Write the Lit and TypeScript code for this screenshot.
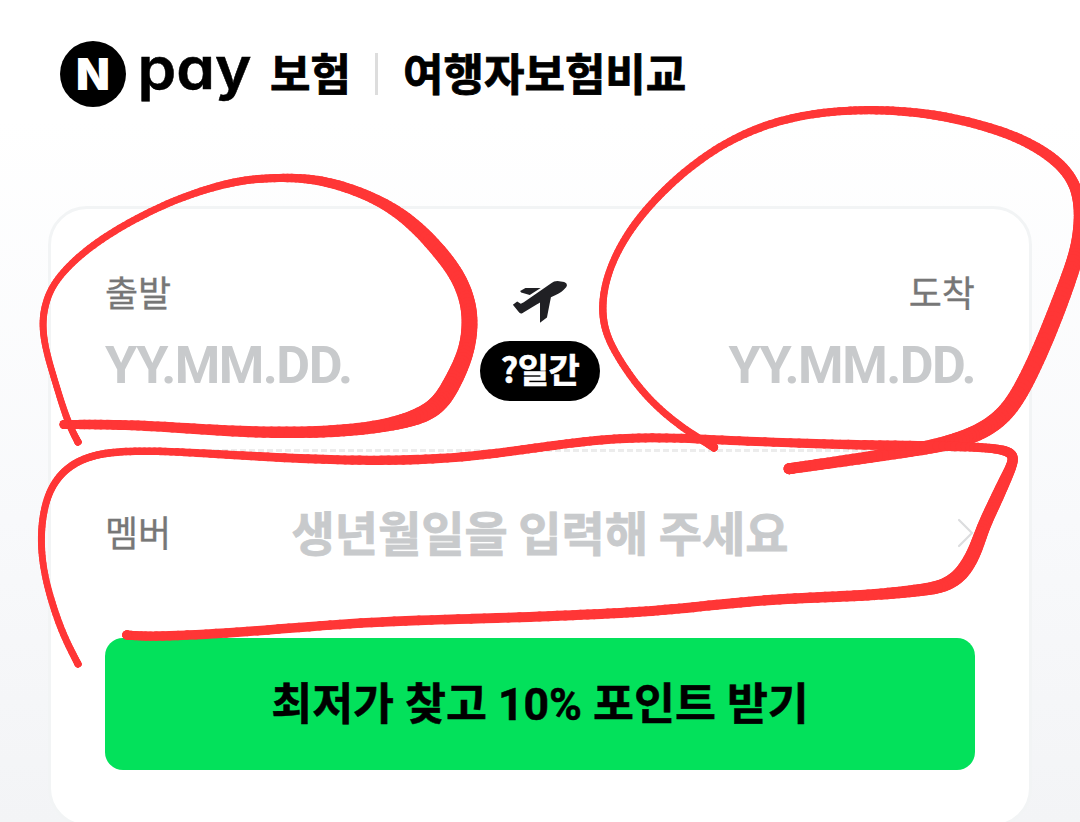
import { LitElement, html, css, svg } from 'lit';
import { customElement, property } from 'lit/decorators.js';

// x, y, thickness
type PenPoint = [number, number, number];

const PEN_STROKES: PenPoint[][] = [
  // departure
  [
    [78, 442, 7], [69, 425, 7], [60.7, 400, 6.5], [52.5, 373, 6.5], [45, 347, 6.5], [42, 323, 7],
    [45.5, 302, 7], [54, 282, 6.5], [77, 257, 7], [110, 233, 7], [146.5, 213, 7], [180, 198, 7],
    [213, 187, 7.5], [245, 179.5, 8], [279, 177.5, 8], [313, 178.5, 9], [347, 187, 10], [381, 201, 10.5],
    [411, 221, 13], [437, 248, 15], [458, 275, 15], [468.5, 302, 15.5], [470.5, 327, 16],
    [466, 354, 16], [454, 380, 18], [441, 403, 18], [422, 416, 17], [390, 425, 13],
    [347, 431, 12], [287, 433, 11.5], [225, 431, 11], [163, 426.5, 10], [113, 424.5, 10],
    [64, 424.5, 9],
  ],
  // arrival
  [
    [714, 447.5, 8], [690, 433, 7], [662, 412, 7], [639, 388, 7], [620, 361, 7],
    [605, 333.5, 7], [601.5, 306.7, 7.5], [606, 279, 7], [617, 251.5, 7], [634, 224, 7.5],
    [657, 197, 7.5], [687, 169, 7.5], [724, 143, 7.5], [765, 124.5, 8], [808, 114, 8],
    [850, 110, 8], [892, 110, 8.5], [940, 115, 9], [986, 126, 9.5], [1025, 140, 10],
    [1057, 160, 11], [1074, 181, 11], [1080, 203, 12], [1081, 225, 14], [1078, 249, 15],
    [1070, 275, 16], [1058, 307, 17], [1045, 340, 17], [1027, 380, 17],
    [1009, 411, 17], [986.7, 429, 17], [963, 439, 16], [933, 446.7, 14], [890, 454, 12],
    [840, 461.5, 11.5], [789, 468.7, 11],
  ],
  // member
  [
    [78, 664, 7], [63, 635, 7], [51.5, 602, 7], [43.5, 571, 6.5], [40.5, 541, 7], [43, 511.7, 7],
    [51, 486, 7], [68, 466, 7.5], [93, 454.5, 7.5], [125, 451, 7.5], [163, 451, 7.5],
    [215, 454, 8], [287, 458, 9], [345, 460.3, 9], [403, 460.5, 9.5], [463, 457.5, 9],
    [516.7, 450.7, 9], [566.7, 443.5, 9], [613, 438.5, 9], [664, 437.2, 9], [730, 440.5, 9],
    [800, 443.3, 9], [865, 445, 9.5], [926.7, 446, 10], [973, 446.7, 9], [1000, 449, 9],
    [1012, 453, 10], [1014, 461, 10], [1005, 480, 12], [995, 502, 13], [983, 527, 13],
    [975, 552, 14], [962, 575, 15], [943, 587, 13], [918, 590.5, 12], [870, 595.5, 11],
    [810, 597.5, 10.5], [750, 601, 10], [683, 608.5, 10], [633, 612.5, 10], [583, 614.7, 10],
    [516.7, 617.7, 10], [400, 620.5, 9.5], [320, 625.5, 9.5], [236.7, 632.7, 9.5],
    [153, 637, 9.5], [126.7, 635, 9],
  ],
];

// Uniform cubic B-spline, pinned to the first and last points
function sample(points: PenPoint[], steps = 8): PenPoint[] {
  const first = points[0];
  const last = points[points.length - 1];
  const ctrl = [first, first, ...points, last, last];
  const out: PenPoint[] = [];
  for (let i = 0; i < ctrl.length - 3; i++) {
    for (let s = 0; s < steps; s++) {
      const t = s / steps;
      const b0 = (1 - t) ** 3 / 6;
      const b1 = (3 * t ** 3 - 6 * t ** 2 + 4) / 6;
      const b2 = (-3 * t ** 3 + 3 * t ** 2 + 3 * t + 1) / 6;
      const b3 = t ** 3 / 6;
      out.push(
        [0, 1, 2].map(
          (k) => b0 * ctrl[i][k] + b1 * ctrl[i + 1][k] + b2 * ctrl[i + 2][k] + b3 * ctrl[i + 3][k]
        ) as PenPoint
      );
    }
  }
  out.push(last);
  return out;
}

@customElement('pen-marks')
export class PenMarks extends LitElement {
  static styles = css`
    :host {
      display: block;
      pointer-events: none;
    }
    .canvas {
      display: block;
      width: 100%;
      height: 100%;
    }
    .ink {
      stroke: #ff3636;
      stroke-linecap: round;
    }
  `;

  private renderStroke(points: PenPoint[]) {
    const pts = sample(points);
    return pts.slice(1).map(
      ([x, y, w], i) => svg`
        <line class="ink" x1=${pts[i][0]} y1=${pts[i][1]} x2=${x} y2=${y} stroke-width=${w} />
      `
    );
  }

  override render() {
    return html`
      <svg class="canvas" viewBox="0 0 1080 822" aria-hidden="true">
        ${PEN_STROKES.map((points) => this.renderStroke(points))}
      </svg>
    `;
  }
}

@customElement('date-field')
export class DateField extends LitElement {
  static styles = css`
    :host {
      display: flex;
      flex-direction: column;
      flex: 1;
    }
    :host([end]) {
      align-items: flex-end;
    }
    .label {
      color: #777;
      font-size: 36px;
      line-height: 50px;
      white-space: nowrap;
      -webkit-text-stroke: 0.3px;
    }
    .value {
      margin-top: 17px;
      color: #c8cacc;
      font-family: Roboto, 'Noto Sans CJK KR', sans-serif;
      font-size: 52px;
      font-weight: 700;
      line-height: 66px;
      letter-spacing: -1.5px;
    }
  `;

  @property() label = '';
  @property({ type: Boolean, reflect: true }) end = false;

  override render() {
    return html`
      <span class="label">${this.label}</span>
      <span class="value">YY.MM.DD.</span>
    `;
  }
}

@customElement('app-root')
export class AppRoot extends LitElement {
  static styles = css`
    :host {
      display: block;
      position: relative;
      box-sizing: border-box;
      height: 822px;
      overflow: hidden;
      background: linear-gradient(#fff 120px, #f8f9fb 520px, #f3f4f6 822px);
      color: #000;
      font-family: 'Noto Sans CJK KR', sans-serif;
    }
    .header {
      display: flex;
      align-items: center;
      height: 66px;
      padding: 41px 60px 0;
    }
    .logo {
      flex: none;
      width: 192px;
      height: 66px;
      overflow: visible;
    }
    .logo-n {
      fill: #fff;
      font: 900 44px Inter, sans-serif;
    }
    .logo-pay {
      font: 600 58px Inter, sans-serif;
      font-feature-settings: 'cv11';
      stroke: #000;
      stroke-width: 0.5px;
    }
    .service,
    .title {
      padding-bottom: 4px;
      font-size: 44px;
      font-weight: 700;
      line-height: 62px;
      white-space: nowrap;
      -webkit-text-stroke: 0.8px;
    }
    .service {
      margin-left: 18px;
    }
    .divider {
      width: 3px;
      height: 42px;
      margin: 0 25px 0 24px;
      background: #ddd;
    }
    .card {
      box-sizing: border-box;
      width: 984px;
      height: 621px;
      margin: 99px auto 0;
      padding: 57px 54px 0;
      border: 3px solid #f2f4f5;
      border-radius: 39px;
      background: #fff;
    }
    .dates {
      display: flex;
      height: 183px;
    }
    .trip {
      display: flex;
      flex-direction: column;
      align-items: center;
      width: 120px;
      padding-top: 14px;
    }
    .plane {
      width: 56px;
      height: 43px;
    }
    .days {
      width: 120px;
      height: 60px;
      margin-top: 18px;
      border-radius: 30px;
      background: #000;
      color: #fff;
      font-size: 34px;
      font-weight: 700;
      line-height: 56px;
      letter-spacing: -0.5px;
      text-align: center;
      -webkit-text-stroke: 0.6px;
    }
    .rule {
      height: 3px;
      background: repeating-linear-gradient(90deg, #ececec 0 6px, transparent 6px 9px);
    }
    .member {
      display: grid;
      grid-template-columns: 120px 1fr 120px;
      align-items: center;
      height: 165px;
      margin-bottom: 21px;
    }
    .member-label {
      padding-bottom: 7px;
      color: #777;
      font-size: 36px;
      -webkit-text-stroke: 0.3px;
    }
    .member-value {
      padding-bottom: 8px;
      color: #c8cacc;
      font-size: 47px;
      font-weight: 700;
      text-align: center;
      white-space: nowrap;
      -webkit-text-stroke: 0.8px;
    }
    .chevron {
      justify-self: end;
      width: 18px;
      height: 30px;
      margin-bottom: 3px;
    }
    .submit {
      display: block;
      width: 100%;
      height: 132px;
      padding: 2px 0 0;
      border: 0;
      border-radius: 18px;
      background: #03e15b;
      color: #000;
      font: 700 44.5px/130px Roboto, 'Noto Sans CJK KR', sans-serif;
      -webkit-text-stroke: 0.5px;
    }
    .marks {
      position: absolute;
      inset: 0;
    }
  `;

  override render() {
    return html`
      <header class="header">
        <svg class="logo" viewBox="0 0 192 66" role="img" aria-label="N pay">
          <circle cx="33" cy="33" r="33" />
          <text class="logo-n" x="33" y="49" text-anchor="middle">N</text>
          <text class="logo-pay" x="77.5" y="47.5" textLength="114" lengthAdjust="spacingAndGlyphs">pay</text>
        </svg>
        <span class="service">보험</span>
        <span class="divider"></span>
        <span class="title">여행자보험비교</span>
      </header>
      <main class="card">
        <section class="dates">
          <date-field label="출발"></date-field>
          <div class="trip">
            <svg class="plane" viewBox="155 60 168 130" fill="#202024" aria-hidden="true">
              <path d="M179 93 195 84H241L208 105 182 98Z" />
              <path
                d="M157 135 170 125 181 132 190 127 274 69Q280 63 292 63L312 66Q325 71 318 82L310 90Q300 100 272 112L260 173 239 189V128Q237 130 230 133L184 161Q180 162 176 158Z"
              />
            </svg>
            <span class="days">?일간</span>
          </div>
          <date-field label="도착" end></date-field>
        </section>
        <div class="rule"></div>
        <section class="member">
          <span class="member-label">멤버</span>
          <span class="member-value">생년월일을 입력해 주세요</span>
          <svg class="chevron" viewBox="0 0 18 30" fill="none" stroke="#dcdddf" stroke-width="2.2" stroke-linecap="round">
            <path d="M2 2 15 15 2 28" />
          </svg>
        </section>
        <button class="submit" type="button">최저가 찾고 10% 포인트 받기</button>
      </main>
      <pen-marks class="marks"></pen-marks>
    `;
  }
}
